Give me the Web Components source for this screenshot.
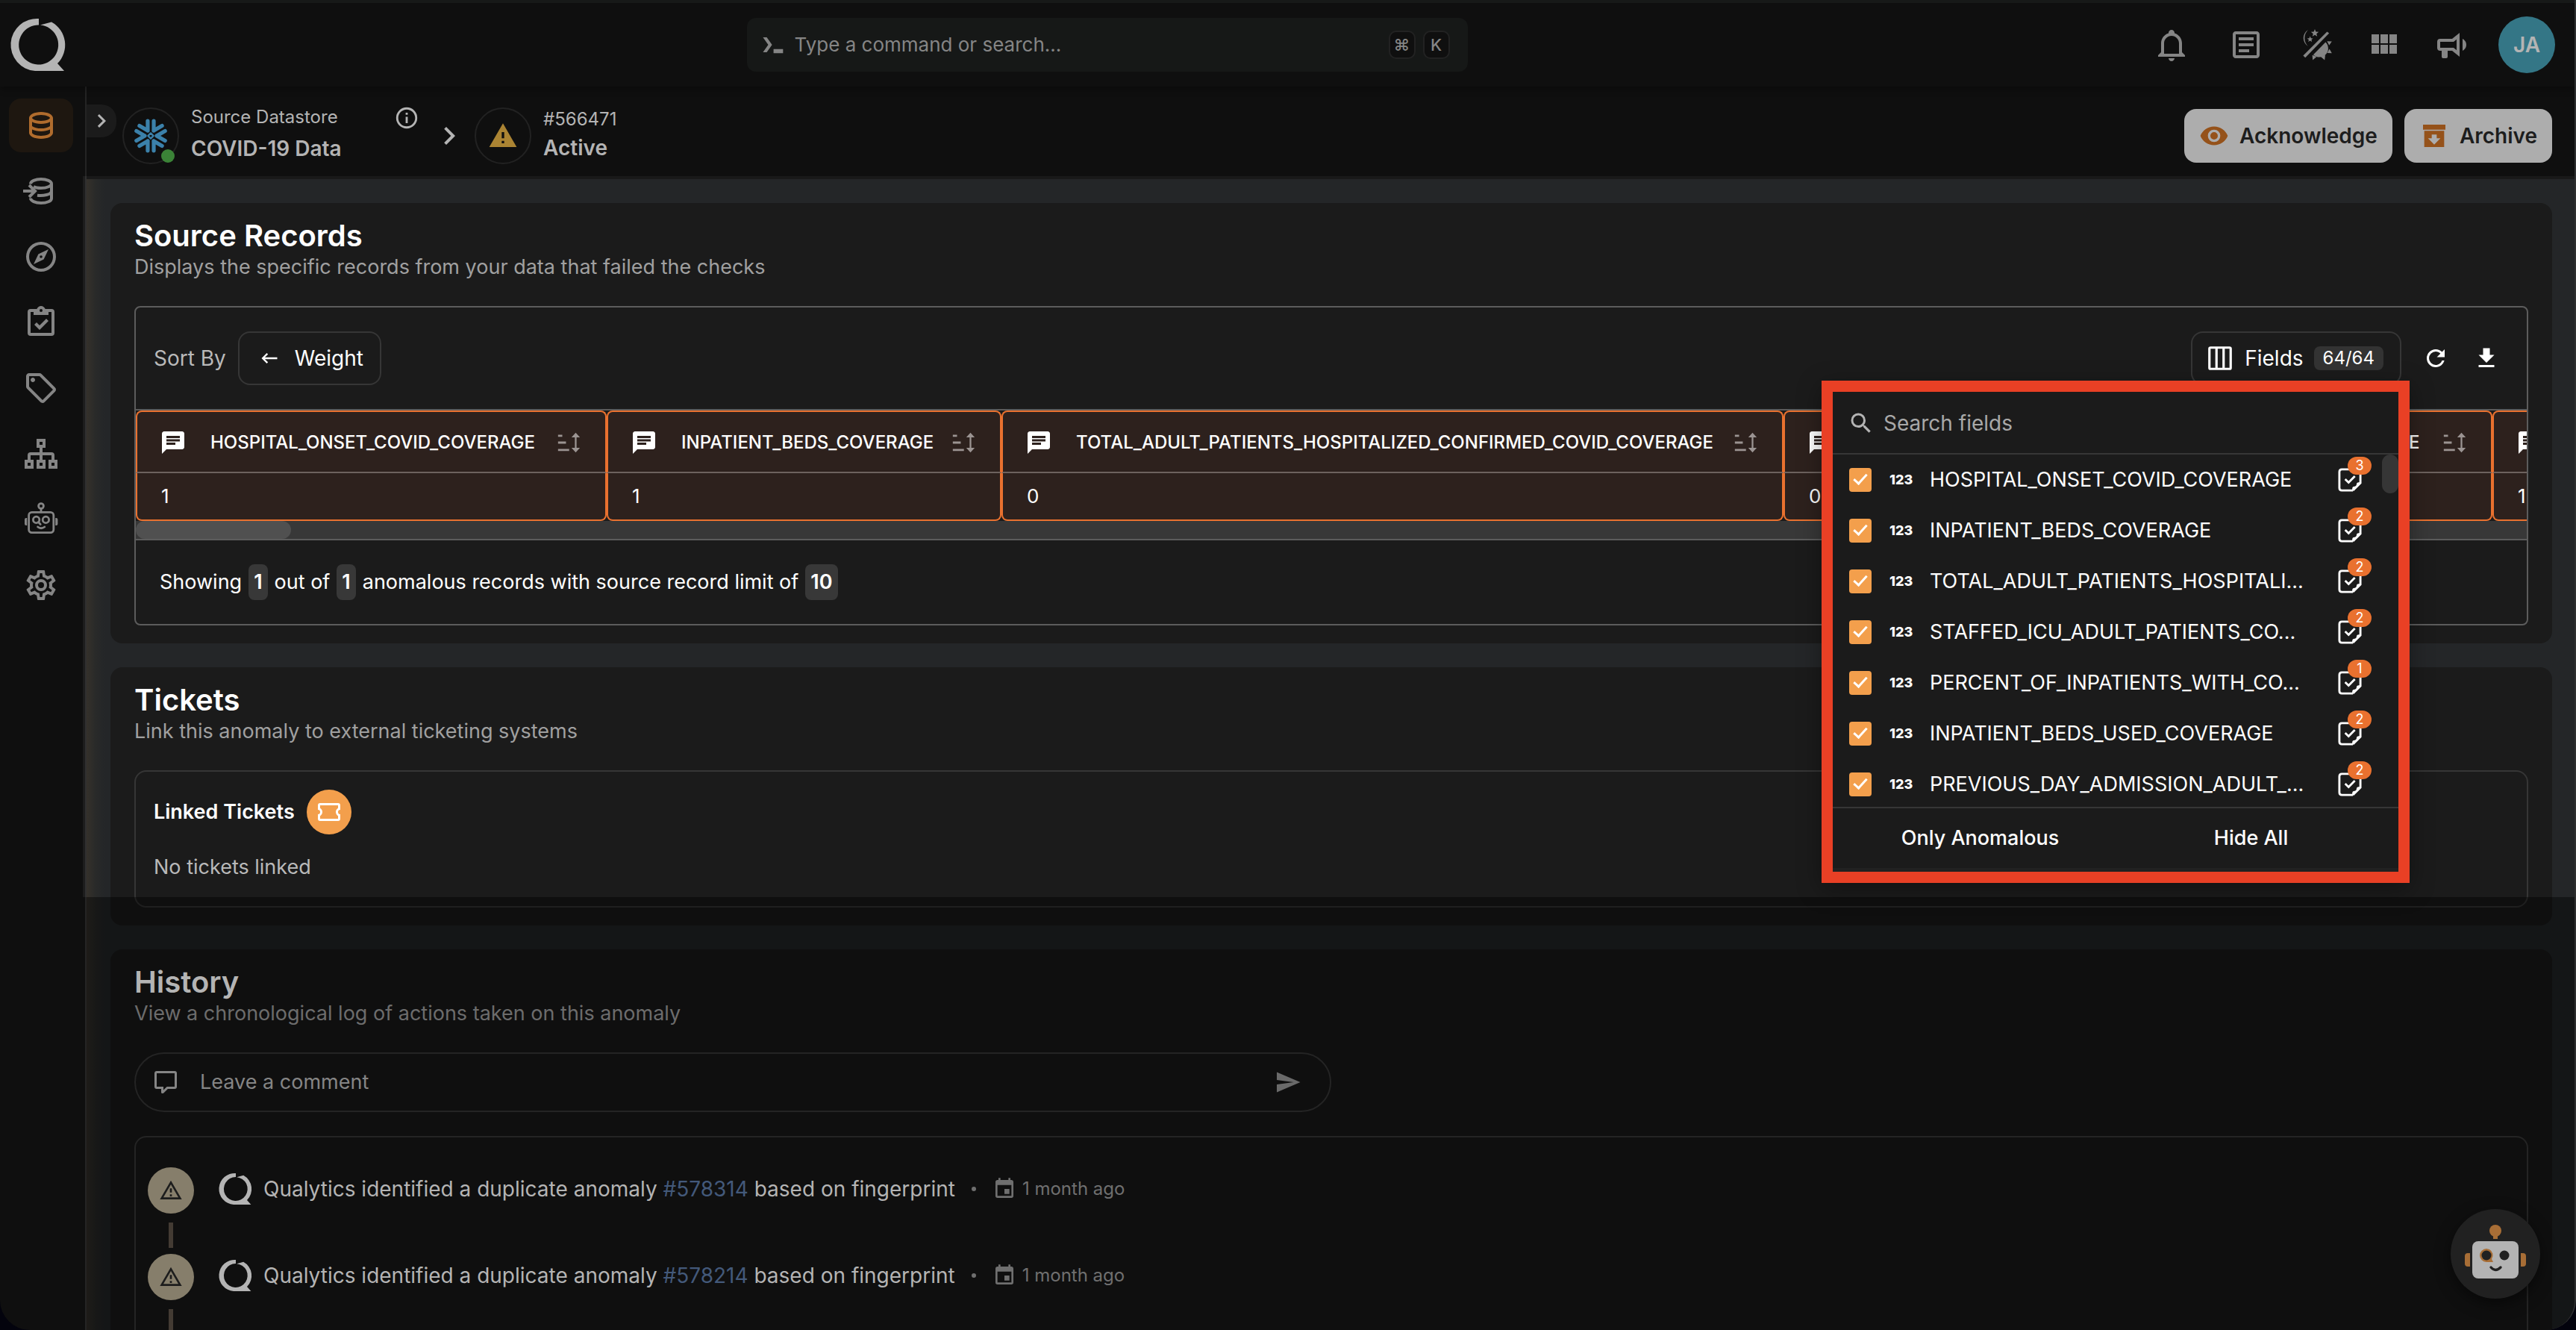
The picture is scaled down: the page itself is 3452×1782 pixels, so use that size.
<!DOCTYPE html>
<html lang="en">
<head>
<meta charset="utf-8">
<title>Anomaly #566471</title>
<style>
  html, body { margin: 0; height: 100%; background: #03030d; }
  body { font-family: "Inter", "Noto Sans", sans-serif; font-size: 28px; line-height: 36px; color: #fff; overflow: hidden; }
</style>
</head>
<body>
<app-shell>
  <app-header slot="header"></app-header>
  <side-nav slot="nav"></side-nav>
  <page-bar slot="bar"></page-bar>
  <section-card heading="Source Records" subheading="Displays the specific records from your data that failed the checks">
    <source-records></source-records>
  </section-card>
  <section-card heading="Tickets" subheading="Link this anomaly to external ticketing systems">
    <linked-tickets></linked-tickets>
  </section-card>
  <section-card muted heading="History" subheading="View a chronological log of actions taken on this anomaly">
    <history-log></history-log>
  </section-card>
  <assistant-button slot="fab"></assistant-button>
</app-shell>

<script>
const ICONS = {
  bell: '<path d="M10 21H14C14 22.1 13.1 23 12 23S10 22.1 10 21M21 19V20H3V19L5 17V11C5 7.9 7.03 5.17 10 4.29V4C10 2.9 10.9 2 12 2S14 2.9 14 4V4.29C16.97 5.17 19 7.9 19 11V17L21 19M17 11C17 8.24 14.76 6 12 6S7 8.24 7 11V18H17V11Z"/>',
  notes: '<path d="M5 3C3.89 3 3 3.89 3 5V19C3 20.11 3.89 21 5 21H19C20.11 21 21 20.11 21 19V5C21 3.89 20.11 3 19 3H5M5 5H19V19H5V5M7 7V9H17V7H7M7 11V13H17V11H7M7 15V17H14V15H7Z"/>',
  theme: '<path d="M20.2 3.2L21.6 4.3L5.6 20.6L4.2 19.3Z"/><path d="M7.5 2A6.4 6.4 0 0 0 7.5 13A7.6 7.6 0 0 1 7.5 2Z"/><path d="M12 1.5L12.7 3.3L14.6 3.4L13.1 4.6L13.6 6.4L12 5.4L10.4 6.4L10.9 4.6L9.4 3.4L11.3 3.3ZM8.8 6.3L9.4 7.6L10.8 7.7L9.7 8.6L10.1 10L8.8 9.2L7.6 10L8 8.6L6.8 7.7L8.3 7.6Z"/><path d="M19.2 10.2A5.6 5.6 0 0 1 11 18.6Z"/><path d="M20.2 9.6L23.4 9.8L21.6 12.4ZM21.8 14.8L23.4 17.6L20.3 17.5ZM16 20L19 18.9L18.6 22.2ZM10.3 18.9L13.2 20L10.6 22.2Z"/>',
  grid: '<path d="M4 11H9V5H4M4 18H9V12H4M10 18H15V12H10M16 18H21V12H16M10 11H15V5H10M16 5V11H21V5"/>',
  megaphone: '<path d="M12 8H4A2 2 0 0 0 2 10V14A2 2 0 0 0 4 16H5V20A1 1 0 0 0 6 21H8A1 1 0 0 0 9 20V16H12L17 20V4L12 8M15 15.6L13 14H4V10H13L15 8.4V15.6M21.5 12C21.5 13.71 20.54 15.26 19 16V8C20.53 8.75 21.5 10.3 21.5 12Z"/>',
  prompt: '<path d="M1 5H4.6L9.6 12L4.6 19H1L6 12ZM11 16H20V20H11Z"/>',
  database: '<path d="M12 3C7.58 3 4 4.79 4 7V17C4 19.21 7.59 21 12 21S20 19.21 20 17V7C20 4.79 16.42 3 12 3M18 17C18 17.5 15.87 19 12 19S6 17.5 6 17V14.77C7.61 15.55 9.72 16 12 16S16.39 15.55 18 14.77V17M18 12.45C16.7 13.4 14.42 14 12 14C9.58 14 7.3 13.4 6 12.45V9.64C7.47 10.47 9.61 11 12 11C14.39 11 16.53 10.47 18 9.64V12.45M12 9C8.13 9 6 7.5 6 7S8.13 5 12 5C15.87 5 18 6.5 18 7S15.87 9 12 9Z"/>',
  databaseIn: '<g fill="none" stroke="currentColor" stroke-width="2"><path d="M5 7.2C5 5.4 8.1 4 12 4S19 5.4 19 7V17C19 18.7 15.9 20 12 20S5 18.6 5 16.8"/><path d="M7 9C8.2 9.7 10 10 12 10C15.9 10 19 8.7 19 7M9.5 14.9C13.5 15.4 19 14.3 19 12"/><path d="M0 12H8M4 8L8 12L4 16"/></g>',
  compass: '<path d="M7 17L10.2 10.2L17 7L13.8 13.8L7 17M12 11.1A.9.9 0 0 0 11.1 12A.9.9 0 0 0 12 12.9A.9.9 0 0 0 12.9 12A.9.9 0 0 0 12 11.1M12 2A10 10 0 0 1 22 12A10 10 0 0 1 12 22A10 10 0 0 1 2 12A10 10 0 0 1 12 2M12 4A8 8 0 0 0 4 12A8 8 0 0 0 12 20A8 8 0 0 0 20 12A8 8 0 0 0 12 4Z"/>',
  clipboard: '<path d="M19 3H14.82C14.4 1.84 13.3 1 12 1C10.7 1 9.6 1.84 9.18 3H5A2 2 0 0 0 3 5V19A2 2 0 0 0 5 21H19A2 2 0 0 0 21 19V5A2 2 0 0 0 19 3M12 3A1 1 0 0 1 13 4A1 1 0 0 1 12 5A1 1 0 0 1 11 4A1 1 0 0 1 12 3M7 7H17V5H19V19H5V5H7V7M7.5 13.5L9 12L11 14L15.5 9.5L17 11L11 17L7.5 13.5Z"/>',
  tag: '<path d="M21.41 11.58L12.41 2.58C12.04 2.21 11.53 2 11 2H4C2.9 2 2 2.9 2 4V11C2 11.53 2.21 12.04 2.59 12.41L11.58 21.41C11.95 21.78 12.47 22 13 22S14.04 21.79 14.41 21.41L21.41 14.41C21.79 14.04 22 13.53 22 13C22 12.47 21.79 11.95 21.41 11.58M13 20L4 11V4H11L20 13L13 20M6.5 5C5.67 5 5 5.67 5 6.5S5.67 8 6.5 8 8 7.33 8 6.5 7.33 5 6.5 5Z"/>',
  sitemap: '<g fill="none" stroke="currentColor" stroke-width="2"><path d="M10 3H14V7H10ZM2 17H6V21H2ZM10 17H14V21H10ZM18 17H22V21H18Z"/><path d="M12 8V16M4 16V13Q4 12 5 12H19Q20 12 20 13V16"/></g>',
  robot: '<g fill="none" stroke="currentColor" stroke-width="1.4" stroke-linecap="round"><rect x="3.8" y="7.2" width="16.6" height="13.6" rx="2"/><circle cx="12" cy="3" r="1.7"/><path d="M12 5V7"/><circle cx="8.8" cy="12.2" r="2.1"/><circle cx="15.2" cy="12.2" r="2.1"/><path d="M10.2 13.8L11.6 15.2M9.8 17Q12 18.8 14.4 17"/></g><path d="M1 12Q1 11 2 11H2.6V16H2Q1 16 1 15ZM21.6 11H22.2Q23.2 11 23.2 12V15Q23.2 16 22.2 16H21.6Z"/>',
  cog: '<path d="M12 8A4 4 0 0 1 16 12A4 4 0 0 1 12 16A4 4 0 0 1 8 12A4 4 0 0 1 12 8M12 10A2 2 0 0 0 10 12A2 2 0 0 0 12 14A2 2 0 0 0 14 12A2 2 0 0 0 12 10M10 22C9.75 22 9.54 21.82 9.5 21.58L9.13 18.93C8.5 18.68 7.96 18.34 7.44 17.94L4.95 18.95C4.73 19.03 4.46 18.95 4.34 18.73L2.34 15.27C2.21 15.05 2.27 14.78 2.46 14.63L4.57 12.97L4.5 12L4.57 11L2.46 9.37C2.27 9.22 2.21 8.95 2.34 8.73L4.34 5.27C4.46 5.05 4.73 4.96 4.95 5.05L7.44 6.05C7.96 5.66 8.5 5.32 9.13 5.07L9.5 2.42C9.54 2.18 9.75 2 10 2H14C14.25 2 14.46 2.18 14.5 2.42L14.87 5.07C15.5 5.32 16.04 5.66 16.56 6.05L19.05 5.05C19.27 4.96 19.54 5.05 19.66 5.27L21.66 8.73C21.79 8.95 21.73 9.22 21.54 9.37L19.43 11L19.5 12L19.43 13L21.54 14.63C21.73 14.78 21.79 15.05 21.66 15.27L19.66 18.73C19.54 18.95 19.27 19.04 19.05 18.95L16.56 17.95C16.04 18.34 15.5 18.68 14.87 18.93L14.5 21.58C14.46 21.82 14.25 22 14 22H10M11.25 4L10.88 6.61C9.68 6.86 8.62 7.5 7.85 8.39L5.44 7.35L4.69 8.65L6.8 10.2C6.4 11.37 6.4 12.64 6.8 13.8L4.68 15.36L5.43 16.66L7.86 15.62C8.63 16.5 9.68 17.14 10.87 17.38L11.24 20H12.76L13.13 17.39C14.32 17.14 15.37 16.5 16.14 15.62L18.57 16.66L19.32 15.36L17.2 13.81C17.6 12.64 17.6 11.37 17.2 10.2L19.31 8.65L18.56 7.35L16.15 8.39C15.38 7.5 14.32 6.86 13.12 6.62L12.75 4H11.25Z"/>',
  chevron: '<path d="M8.59 16.58L13.17 12L8.59 7.41L10 6L16 12L10 18L8.59 16.58Z"/>',
  info: '<path d="M11 9H13V7H11M12 20C7.59 20 4 16.41 4 12S7.59 4 12 4 20 7.59 20 12 16.41 20 12 20M12 2A10 10 0 0 0 2 12A10 10 0 0 0 12 22A10 10 0 0 0 22 12A10 10 0 0 0 12 2M11 17H13V11H11V17Z"/>',
  alert: '<path d="M13 14H11V9H13M13 18H11V16H13M1 21H23L12 2L1 21Z"/>',
  alertOutline: '<path d="M12 2L1 21H23M12 6L19.53 19H4.47M11 10V14H13V10M11 16V18H13V16"/>',
  eye: '<path d="M12 9A3 3 0 0 0 9 12A3 3 0 0 0 12 15A3 3 0 0 0 15 12A3 3 0 0 0 12 9M12 17A5 5 0 0 1 7 12A5 5 0 0 1 12 7A5 5 0 0 1 17 12A5 5 0 0 1 12 17M12 4.5C7 4.5 2.73 7.61 1 12C2.73 16.39 7 19.5 12 19.5C17 19.5 21.27 16.39 23 12C21.27 7.61 17 4.5 12 4.5Z"/>',
  archive: '<path fill-rule="evenodd" d="M3 3H21V7H3ZM4 8H20V21H4ZM14 14V11H10V14H7L12 19L17 14Z"/>',
  back: '<path d="M21 11H6.83L10.41 7.41L9 6L3 12L9 18L10.41 16.59L6.83 13H21Z"/>',
  columns: '<path fill="none" stroke="currentColor" stroke-width="2" d="M4 3H20Q21 3 21 4V20Q21 21 20 21H4Q3 21 3 20V4Q3 3 4 3ZM9 3V21M15 3V21"/>',
  refresh: '<path d="M17.65 6.35C16.2 4.9 14.21 4 12 4A8 8 0 0 0 4 12A8 8 0 0 0 12 20C15.73 20 18.84 17.45 19.73 14H17.65C16.83 16.33 14.61 18 12 18A6 6 0 0 1 6 12A6 6 0 0 1 12 6C13.66 6 15.14 6.69 16.22 7.78L13 11H20V4L17.65 6.35Z"/>',
  download: '<path d="M5 20H19V18H5M19 9H15V3H9V9H5L12 16L19 9Z"/>',
  chat: '<path d="M20 2H4C2.9 2 2 2.9 2 4V22L6 18H20C21.1 18 22 17.1 22 16V4C22 2.9 21.1 2 20 2ZM6 9H18V11H6ZM14 14H6V12H14ZM18 8H6V6H18Z" fill-rule="evenodd"/>',
  sort: '<path d="M2 4.5H6V6.5H2ZM2 11H9.5V13H2ZM2 18H12.5V20H2ZM17.9 6H19.5V18H17.9Z"/><path d="M18.7 2.6L22.7 7H14.7ZM18.7 21.4L14.7 17H22.7Z"/>',
  search: '<path d="M9.5 3A6.5 6.5 0 0 1 16 9.5C16 11.11 15.41 12.59 14.44 13.73L14.71 14H15.5L20.5 19L19 20.5L14 15.5V14.71L13.73 14.44C12.59 15.41 11.11 16 9.5 16A6.5 6.5 0 0 1 3 9.5A6.5 6.5 0 0 1 9.5 3M9.5 5C7 5 5 7 5 9.5C5 12 7 14 9.5 14C12 14 14 12 14 9.5C14 7 12 5 9.5 5Z"/>',
  check: '<g fill="none" stroke="currentColor" stroke-width="1.8"><path d="M14.6 20.9H5.2Q3.1 20.9 3.1 18.8V5.2Q3.1 3.1 5.2 3.1H18.8Q20.9 3.1 20.9 5.2V14.6L14.6 20.9"/><path d="M8 11.4L10.9 14.2L16.2 8.8"/></g><path d="M14 21.6V19.5Q14 17.6 16 17.6Q17.6 17.6 17.6 16Q17.6 14 19.5 14H21.6Z"/>',
  ticket: '<path d="M4 4A2 2 0 0 0 2 6V10A2 2 0 0 1 4 12A2 2 0 0 1 2 14V18A2 2 0 0 0 4 20H20A2 2 0 0 0 22 18V14A2 2 0 0 1 20 12A2 2 0 0 1 22 10V6A2 2 0 0 0 20 4H4M4 6H20V8.54C18.76 9.25 18 10.57 18 12C18 13.43 18.76 14.75 20 15.46V18H4V15.46C5.24 14.75 6 13.43 6 12C6 10.57 5.24 9.25 4 8.54V6Z"/>',
  comment: '<path d="M9 22A1 1 0 0 1 8 21V18H4A2 2 0 0 1 2 16V4C2 2.89 2.9 2 4 2H20A2 2 0 0 1 22 4V16A2 2 0 0 1 20 18H13.9L10.2 21.71C10 21.9 9.75 22 9.5 22H9M10 16V19.08L13.08 16H20V4H4V16H10Z"/>',
  send: '<path d="M2 21L23 12L2 3V10L17 12L2 14V21Z"/>',
  calendar: '<path d="M19 19H5V8H19M16 1V3H8V1H6V3H5C3.89 3 3 3.89 3 5V19A2 2 0 0 0 5 21H19A2 2 0 0 0 21 19V5C21 3.89 20.1 3 19 3H18V1M17 12H12V17H17V12Z"/>',
  // Brand ring with the notch at the top and the tail bottom right
  brand: '<path transform="translate(1.5 1.5) scale(.3)" d="M35 0A35 35 0 0 0 30 70H69L60 60A35 35 0 0 0 52 4.5L37 8.6A26.5 26.5 0 1 1 35 8.5Z"/>',
};

// Six chevrons turned round a small diamond
const arm = 'M4 0L9.6 -3.2M4 0L9.6 3.2';
ICONS.snowflake =
  '<g fill="none" stroke="currentColor" stroke-width="2.6" stroke-linecap="round" stroke-linejoin="round" transform="translate(12 12)">' +
  [0, 60, 120, 180, 240, 300].map(a => `<path transform="rotate(${a})" d="${arm}"/>`).join('') +
  '<path stroke-width="1.2" d="M0 -1.8L1.8 0L0 1.8L-1.8 0Z"/></g>';

class BaseElement extends HTMLElement {
  constructor() {
    super();
    this.attachShadow({ mode: 'open' });
  }

  connectedCallback() {
    this.shadowRoot.innerHTML = `
      <style>
        *, *::before { box-sizing: border-box; }
        button, input { font: inherit; color: inherit; }
        button { border: 0; background: none; padding: 0; display: inline-flex; align-items: center; cursor: pointer; }
        a { color: inherit; text-decoration: none; }
        h2, h3, p, ul { margin: 0; padding: 0; }
        ${this.styles()}
      </style>
      ${this.markup()}`;
  }
}

class AppIcon extends BaseElement {
  styles() {
    const size = this.getAttribute('size') || 48;
    return `
      :host { display: block; flex: none; width: ${size}px; height: ${size}px; }
      svg { display: block; width: 100%; height: 100%; fill: currentColor; overflow: visible; }`;
  }
  markup() {
    return `<svg viewBox="0 0 24 24" aria-hidden="true">${ICONS[this.getAttribute('name')]}</svg>`;
  }
}
customElements.define('app-icon', AppIcon);

class AppShell extends BaseElement {
  styles() {
    return `
      :host {
        display: grid;
        grid-template: auto auto 1fr / 116px 1fr;
        height: 100vh;
        box-sizing: border-box;
        position: relative;
        overflow: hidden;
        background: #0f0f0f;
        border-right: 2px solid #2e2f30;
        border-radius: 0 0 40px 40px;
      }
      .header { grid-column: 1 / 3; }
      .nav { grid-row: 2 / 4; position: relative; border-right: 2px solid #242424; }
      /* the focus area also lights the edge of the nav */
      .nav::after { content: ""; position: absolute; right: -2px; top: 120px; width: 5px; height: 966px; background: rgba(255, 255, 255, .06); }
      .bar { position: relative; }
      main {
        position: relative;
        min-height: 0;
        overflow: hidden;
        background: linear-gradient(90deg, #35312b, #292a29 12px, #242628 24px);
        padding: 32px 30px 32px 32px;
        display: flex;
        flex-direction: column;
        gap: 32px;
      }
      /* everything below the focus area is dimmed */
      .shade { position: absolute; inset: 962px 0 0 0; background: rgba(0, 0, 0, .42); }
      .fab { position: absolute; right: 46px; bottom: 42px; z-index: 3; }
    `;
  }
  markup() {
    return `
      <div class="header"><slot name="header"></slot></div>
      <div class="nav"><slot name="nav"></slot></div>
      <div class="bar"><slot name="bar"></slot></div>
      <main><slot></slot><div class="shade"></div></main>
      <div class="fab"><slot name="fab"></slot></div>`;
  }
}
customElements.define('app-shell', AppShell);

class AppHeader extends BaseElement {
  styles() {
    return `
      :host { display: block; position: relative; z-index: 2; color: #858585; box-shadow: 0 2px 10px rgba(0, 0, 0, .4); }
      header {
        height: 116px;
        box-sizing: border-box;
        border-top: 4px solid #171918;
        display: grid;
        grid-template-columns: 29% 28% 1fr;
        align-items: center;
      }
      .brand { color: #b4b4b4; padding-left: 12px; }
      .search {
        display: flex; align-items: center; gap: 10px;
        height: 72px; padding: 0 24px 0 20px;
        background: #161817; border-radius: 12px;
      }
      input { flex: 1; min-width: 0; border: 0; outline: 0; background: none; padding: 0; font-size: 26px; }
      input::placeholder { color: #858585; opacity: 1; }
      kbd {
        font: 500 22px/34px "Inter", "DejaVu Sans", sans-serif;
        width: 36px; text-align: center; background: #0f0f0f;
        border: 2px solid #222; border-radius: 10px;
      }
      .tools { display: flex; align-items: center; justify-content: flex-end; gap: 44px; padding-right: 26px; }
      .tools button:first-child { margin-right: 8px; }
      .avatar {
        width: 76px; height: 76px; border-radius: 50%; background: #347686; color: #b4b4b4;
        justify-content: center; font-weight: 600; margin-left: -6px;
      }`;
  }
  markup() {
    return `
      <header>
        <a class="brand" href="#" aria-label="Home"><app-icon name="brand" size="80"></app-icon></a>
        <div class="search">
          <app-icon name="prompt" size="34"></app-icon>
          <input type="search" aria-label="Command or search" placeholder="Type a command or search...">
          <kbd>⌘</kbd><kbd>K</kbd>
        </div>
        <div class="tools">
          <button aria-label="Notifications"><app-icon name="bell"></app-icon></button>
          <button aria-label="Activity"><app-icon name="notes"></app-icon></button>
          <button aria-label="Theme"><app-icon name="theme"></app-icon></button>
          <button aria-label="Apps"><app-icon name="grid"></app-icon></button>
          <button aria-label="News"><app-icon name="megaphone"></app-icon></button>
          <button class="avatar">JA</button>
        </div>
      </header>`;
  }
}
customElements.define('app-header', AppHeader);

class SideNav extends BaseElement {
  styles() {
    return `
      :host { display: block; color: #858585; }
      nav { display: flex; flex-direction: column; gap: 16px; padding: 16px 16px 0 12px; }
      a { display: flex; align-items: center; justify-content: center; height: 72px; border-radius: 16px; }
      a.active { background: #1e1710; color: #b06c2d; }`;
  }
  markup() {
    const items = ['database', 'databaseIn', 'compass', 'clipboard', 'tag', 'sitemap', 'robot', 'cog'];
    return `<nav>${items.map((n, i) =>
      `<a href="#${n}" aria-label="${n}" class="${i ? '' : 'active'}"><app-icon name="${n}"></app-icon></a>`).join('')}</nav>`;
  }
}
customElements.define('side-nav', SideNav);

class PageBar extends BaseElement {
  styles() {
    return `
      :host { display: block; color: #b4b4b4; }
      .bar {
        display: flex; align-items: center; height: 124px; box-sizing: border-box;
        padding: 12px 30px 0 48px; border-bottom: 4px solid #191919;
      }
      .toggle {
        position: absolute; left: 0; top: 24px; width: 40px; height: 44px;
        background: #1b1b1b; border-radius: 0 20px 20px 0; justify-content: center;
      }
      .badge {
        position: relative; width: 76px; height: 76px; border-radius: 50%;
        border: 2px solid #222; display: flex; align-items: center; justify-content: center;
      }
      .store { color: #3b81aa; }
      .store::after {
        content: ""; position: absolute; right: 4px; bottom: 0;
        width: 18px; height: 18px; border-radius: 50%; background: #3b8337;
      }
      .warn { color: #ab8433; }
      .text { margin-left: 16px; padding-bottom: 4px; }
      .first { width: 306px; }
      .top { display: flex; justify-content: space-between; font-size: 24px; line-height: 36px; }
      .first .top { line-height: 32px; padding-bottom: 4px; }
      .name { font-weight: 600; line-height: 40px; }
      .sep { margin: 0 10px 0 16px; }
      .actions { display: flex; gap: 16px; margin-left: auto; }
      .actions button {
        height: 72px; padding: 0 20px; gap: 14px; border-radius: 16px;
        background: #adadad; color: #1d1d1d; font-weight: 600;
      }
      .actions app-icon { color: #95521a; }`;
  }
  markup() {
    return `
      <div class="bar">
        <button class="toggle" aria-label="Expand"><app-icon name="chevron" size="36"></app-icon></button>
        <span class="badge store"><app-icon name="snowflake" size="48"></app-icon></span>
        <div class="text first">
          <div class="top"><span>Source Datastore</span><app-icon name="info" size="34"></app-icon></div>
          <div class="name">COVID-19 Data</div>
        </div>
        <app-icon class="sep" name="chevron" size="48"></app-icon>
        <span class="badge warn"><app-icon name="alert" size="40"></app-icon></span>
        <div class="text">
          <div class="top">#566471</div>
          <div class="name">Active</div>
        </div>
        <div class="actions">
          <button><app-icon name="eye" size="40"></app-icon>Acknowledge</button>
          <button><app-icon name="archive" size="40"></app-icon>Archive</button>
        </div>
      </div>`;
  }
}
customElements.define('page-bar', PageBar);

class SectionCard extends BaseElement {
  styles() {
    return `
      :host { display: block; background: #1b1b1b; border-radius: 16px; padding: 20px 32px 24px; --sub: #a0a0a0; }
      :host([muted]) { background: #0f0f0f; color: #b4b4b4; position: relative; z-index: 2; flex: none; min-height: 600px; --sub: #6c6c6c; }
      h2 { font-size: 40px; line-height: 48px; font-weight: 600; }
      p { color: var(--sub); font-size: 27px; margin-bottom: 34px; }`;
  }
  markup() {
    return `
      <h2>${this.getAttribute('heading')}</h2>
      <p>${this.getAttribute('subheading')}</p>
      <slot></slot>`;
  }
}
customElements.define('section-card', SectionCard);

class SourceRecords extends BaseElement {
  styles() {
    return `
      :host { display: block; border: 2px solid #5c5c5c; border-radius: 8px; }
      .toolbar { display: flex; align-items: center; height: 136px; box-sizing: border-box; padding: 0 36px 0 24px; }
      .toolbar > span { color: #b9b9b9; }
      .outlined { height: 72px; border: 2px solid #363636; border-radius: 16px; }
      .sort { margin-left: 16px; padding: 0 22px 0 26px; gap: 20px; }
      .anchor { position: relative; margin-left: auto; margin-right: 28px; }
      .fields { padding: 0 22px 0 18px; gap: 14px; }
      .fields b { font-weight: 400; font-size: 24px; line-height: 32px; background: #333; border-radius: 8px; padding: 0 12px; }
      /* menu hangs over the table, below its button */
      fields-menu { position: absolute; top: 66px; right: -11px; z-index: 5; }
      .tool + .tool { margin-left: 32px; }
      .scroll { overflow: hidden; border-top: 2px solid #5c5c5c; border-bottom: 2px solid #5c5c5c; }
      table { table-layout: fixed; width: 3900px; border-collapse: separate; border-spacing: 0; }
      th, td { border: 2px solid #e9712f; background: #2d211d; padding: 0 32px; text-align: left; font-weight: 400; }
      th { height: 84px; padding: 2px 30px 0; border-bottom-color: #6d625e; border-radius: 8px 8px 0 0; font-size: 24px; font-weight: 500; }
      td { height: 64px; border-top: 0; border-radius: 0 0 8px 8px; font-size: 26px; }
      th div { display: flex; align-items: center; }
      th span { flex: 1; margin-left: 32px; white-space: nowrap; }
      th .order { color: #9b9492; margin-right: 2px; }
      .track { height: 24px; background: #383838; }
      .thumb { height: 24px; width: 208px; background: #505050; border-radius: 12px; }
      .foot { height: 112px; display: flex; align-items: center; gap: 9px; padding: 0 32px; font-size: 27px; }
      .foot b { background: #383838; border-radius: 8px; padding: 0 7px; line-height: 48px; font-weight: 600; }`;
  }
  markup() {
    const cols = [
      ['HOSPITAL_ONSET_COVID_COVERAGE', 1, 631],
      ['INPATIENT_BEDS_COVERAGE', 1, 529],
      ['TOTAL_ADULT_PATIENTS_HOSPITALIZED_CONFIRMED_COVID_COVERAGE', 0, 1048],
      ['STAFFED_ICU_ADULT_PATIENTS_CONFIRMED_COVID_COVERAGE', 0, 950],
      ['', 1, 742],
    ];
    return `
      <div class="toolbar">
        <span>Sort By</span>
        <button class="outlined sort"><app-icon name="back" size="28"></app-icon>Weight</button>
        <div class="anchor">
          <button class="outlined fields"><app-icon name="columns" size="38"></app-icon>Fields <b>64/64</b></button>
          <fields-menu></fields-menu>
        </div>
        <button class="tool" aria-label="Refresh"><app-icon name="refresh" size="36"></app-icon></button>
        <button class="tool" aria-label="Download"><app-icon name="download" size="36"></app-icon></button>
      </div>
      <div class="scroll">
        <table>
          <colgroup>${cols.map(c => `<col style="width:${c[2]}px">`).join('')}</colgroup>
          <thead><tr>${cols.map(c => `
            <th><div><app-icon name="chat" size="36"></app-icon><span>${c[0]}</span><app-icon class="order" name="sort" size="34"></app-icon></div></th>`).join('')}
          </tr></thead>
          <tbody><tr>${cols.map(c => `<td>${c[1]}</td>`).join('')}</tr></tbody>
        </table>
        <div class="track"><div class="thumb"></div></div>
      </div>
      <div class="foot">Showing <b>1</b> out of <b>1</b> anomalous records with source record limit of <b>10</b></div>`;
  }
}
customElements.define('source-records', SourceRecords);

class FieldsMenu extends BaseElement {
  styles() {
    return `
      :host { display: block; width: 788px; border: 15px solid #e94025; background: #1b1b1b; box-sizing: border-box; box-shadow: 0 8px 30px rgba(0, 0, 0, .35); }
      .search { display: flex; align-items: center; gap: 12px; height: 84px; padding: 2px 20px 0; border-bottom: 2px solid #363636; color: #b4b4b4; }
      .search input { flex: 1; min-width: 0; border: 0; outline: 0; background: none; padding: 0; }
      .search input::placeholder { color: #a8a8a8; opacity: 1; }
      .list { position: relative; height: 472px; overflow: hidden; }
      .thumb { position: absolute; right: 0; top: 0; width: 22px; height: 52px; border-radius: 11px; background: #363636; }
      ul { list-style: none; }
      li { display: flex; align-items: center; height: 68px; padding: 0 46px 0 22px; }
      label { display: flex; align-items: center; flex: 1; min-width: 0; }
      input[type=checkbox] {
        appearance: none; flex: none; margin: 0; width: 30px; height: 32px;
        border-radius: 4px; background: #f39f4c; position: relative;
      }
      input[type=checkbox]::before {
        content: ""; position: absolute; left: 10px; top: 4px; width: 10px; height: 18px;
        border: solid #fff; border-width: 0 3px 3px 0; transform: rotate(42deg);
      }
      .type { font-size: 18px; font-weight: 800; width: 36px; margin: 0 18px 0 24px; }
      .name { font-size: 27px; white-space: nowrap; }
      .checks { position: relative; }
      .checks span {
        position: absolute; right: -10px; top: -12px; min-width: 32px; height: 24px; border-radius: 12px;
        background: #e9712f; font-size: 18px; line-height: 24px; text-align: center;
      }
      .foot { display: grid; grid-template-columns: 1fr 1fr; padding: 0 16px; height: 87px; border-top: 2px solid #363636; border-bottom: 5px solid #212121; }
      .foot button { justify-content: center; font-weight: 500; font-size: 27px; }`;
  }
  markup() {
    const fields = [
      ['HOSPITAL_ONSET_COVID_COVERAGE', 3],
      ['INPATIENT_BEDS_COVERAGE', 2],
      ['TOTAL_ADULT_PATIENTS_HOSPITALI...', 2],
      ['STAFFED_ICU_ADULT_PATIENTS_CO...', 2],
      ['PERCENT_OF_INPATIENTS_WITH_CO...', 1],
      ['INPATIENT_BEDS_USED_COVERAGE', 2],
      ['PREVIOUS_DAY_ADMISSION_ADULT_...', 2],
    ];
    return `
      <div class="search"><app-icon name="search" size="36"></app-icon><input type="text" aria-label="Search fields" placeholder="Search fields"></div>
      <div class="list">
        <ul>${fields.map(([name, n]) => `
          <li>
            <label><input type="checkbox" checked><span class="type">123</span><span class="name">${name}</span></label>
            <div class="checks"><app-icon name="check" size="38"></app-icon><span>${n}</span></div>
          </li>`).join('')}
        </ul>
        <div class="thumb"></div>
      </div>
      <div class="foot"><button>Only Anomalous</button><button>Hide All</button></div>`;
  }
}
customElements.define('fields-menu', FieldsMenu);

class LinkedTickets extends BaseElement {
  styles() {
    return `
      :host { display: block; border: 2px solid #363636; border-radius: 16px; padding: 24px 24px 34px; font-size: 27px; }
      .row { display: flex; align-items: center; gap: 16px; margin-bottom: 26px; }
      h3 { font-size: 27px; font-weight: 600; }
      button { width: 60px; height: 60px; border-radius: 50%; background: #f39f4c; justify-content: center; }
      p { color: #b9b9b9; }`;
  }
  markup() {
    return `
      <div class="row"><h3>Linked Tickets</h3><button aria-label="Link ticket"><app-icon name="ticket" size="36"></app-icon></button></div>
      <p>No tickets linked</p>`;
  }
}
customElements.define('linked-tickets', LinkedTickets);

class HistoryLog extends BaseElement {
  styles() {
    return `
      :host { display: block; }
      form {
        display: flex; align-items: center; width: 50%; height: 80px; padding: 0 38px 0 22px; margin-bottom: 32px;
        border: 2px solid #242424; border-radius: 40px; color: #858585;
      }
      input { flex: 1; border: 0; outline: 0; background: none; padding: 0; margin-left: 28px; font-size: 27px; }
      input::placeholder { color: #858585; opacity: 1; }
      form button { color: #6a6a6a; }
      ul { list-style: none; border: 2px solid #242424; border-radius: 16px; padding: 40px 16px; height: 400px; }
      li { display: grid; grid-template-columns: 62px 1fr; column-gap: 32px; height: 116px; }
      .mark { display: flex; flex-direction: column; align-items: center; }
      .dot {
        width: 62px; height: 62px; border-radius: 50%; background: #867e6b; color: #1d1d1d;
        display: flex; align-items: center; justify-content: center;
      }
      .mark::after { content: ""; width: 6px; height: 34px; margin-top: 12px; background: #433b33; }
      .body { display: flex; align-items: center; height: 58px; }
      .text { margin: 0 22px 0 13px; }
      a { color: #43597a; }
      .sep { width: 6px; height: 6px; border-radius: 50%; background: #6f6f6f; margin-right: 22px; }
      time { display: flex; align-items: center; gap: 8px; font-size: 24px; color: #6f6f6f; }`;
  }
  markup() {
    return `
      <form>
        <app-icon name="comment" size="36"></app-icon>
        <input type="text" aria-label="Comment" placeholder="Leave a comment">
        <button type="button" aria-label="Send"><app-icon name="send" size="36"></app-icon></button>
      </form>
      <ul>${['578314', '578214'].map(id => `
        <li>
          <div class="mark"><span class="dot"><app-icon name="alertOutline" size="32"></app-icon></span></div>
          <div class="body">
            <app-icon name="brand" size="48"></app-icon>
            <span class="text">Qualytics identified a duplicate anomaly <a href="#${id}">#${id}</a> based on fingerprint</span>
            <span class="sep"></span>
            <time><app-icon name="calendar" size="32"></app-icon>1 month ago</time>
          </div>
        </li>`).join('')}
      </ul>`;
  }
}
customElements.define('history-log', HistoryLog);

class AssistantButton extends BaseElement {
  styles() {
    return `
      :host { display: block; }
      button { display: flex; width: 120px; height: 120px; border-radius: 50%; background: #212121; box-shadow: 0 6px 20px rgba(0, 0, 0, .5); }
      svg { width: 120px; height: 120px; }`;
  }
  markup() {
    return `
      <button aria-label="Assistant">
        <svg viewBox="0 0 120 120">
          <g fill="#a86e36">
            <circle cx="60" cy="29" r="8"/><path d="M57 34H63V40H57Z"/>
            <path d="M26 59V77H23Q19 77 19 73V63Q19 59 23 59ZM94 59H97Q101 59 101 63V73Q101 77 97 77H94Z"/>
          </g>
          <rect x="29" y="43" width="62" height="50" rx="8" fill="#b3b3b3"/>
          <path fill="#a86e36" d="M48 53A9 9 0 0 0 48 71H57L55 67A9 9 0 0 0 52 54Z"/>
          <g fill="#212121"><circle cx="48" cy="62" r="6.5"/><circle cx="72" cy="62" r="6.5"/></g>
          <path d="M54 78Q60 85 67 78" fill="none" stroke="#212121" stroke-width="3.4" stroke-linecap="round"/>
        </svg>
      </button>`;
  }
}
customElements.define('assistant-button', AssistantButton);
</script>
</body>
</html>
